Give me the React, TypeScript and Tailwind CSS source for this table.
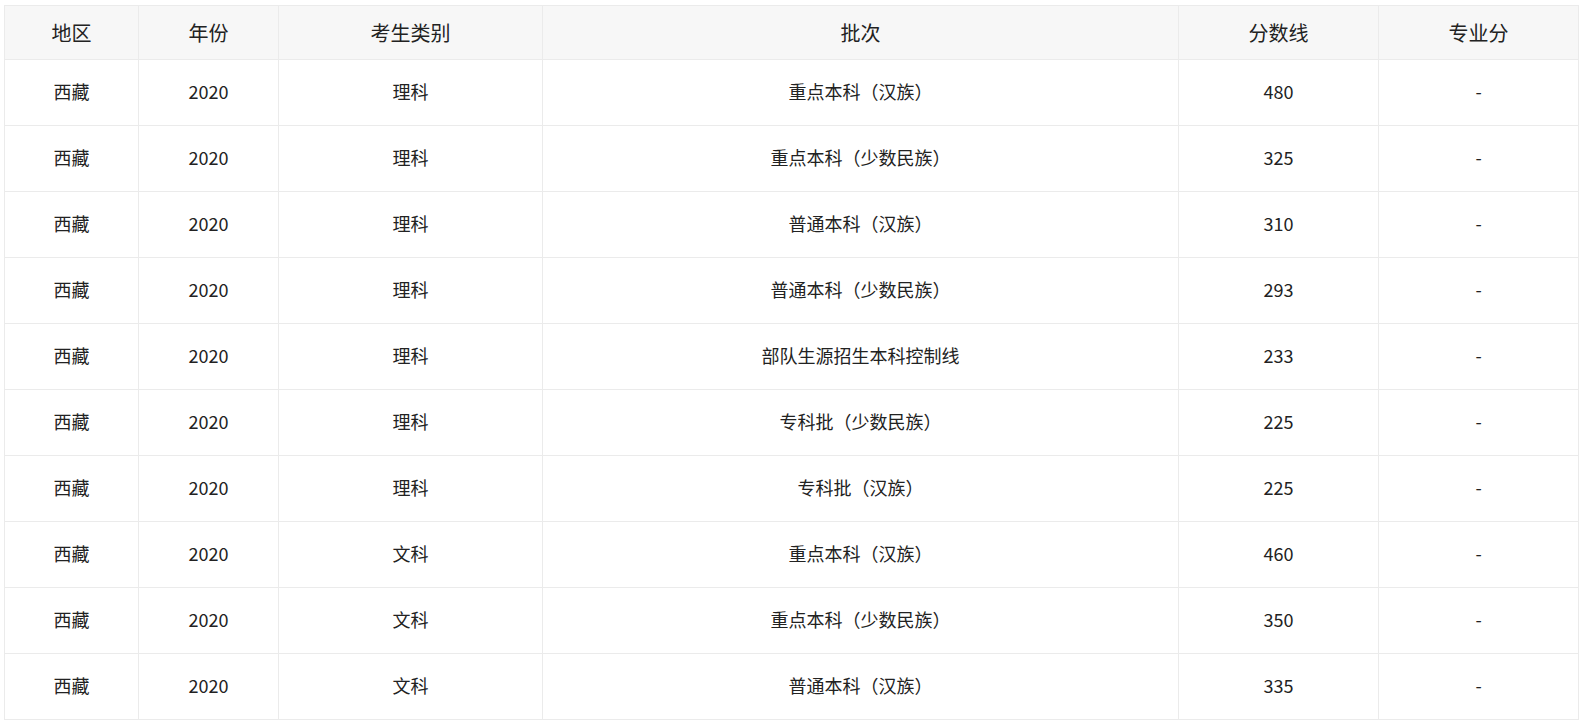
import React from "react";

const rows: [string, string, string, string, string, string][] = [
  ["西藏", "2020", "理科", "重点本科（汉族）", "480", "-"],
  ["西藏", "2020", "理科", "重点本科（少数民族）", "325", "-"],
  ["西藏", "2020", "理科", "普通本科（汉族）", "310", "-"],
  ["西藏", "2020", "理科", "普通本科（少数民族）", "293", "-"],
  ["西藏", "2020", "理科", "部队生源招生本科控制线", "233", "-"],
  ["西藏", "2020", "理科", "专科批（少数民族）", "225", "-"],
  ["西藏", "2020", "理科", "专科批（汉族）", "225", "-"],
  ["西藏", "2020", "文科", "重点本科（汉族）", "460", "-"],
  ["西藏", "2020", "文科", "重点本科（少数民族）", "350", "-"],
  ["西藏", "2020", "文科", "普通本科（汉族）", "335", "-"],
];

const headers = ["地区", "年份", "考生类别", "批次", "分数线", "专业分"];

export default function App() {
  return (
    <div
      className="w-[1580px] h-[723px] bg-white pl-[4px] pt-[5px]"
      style={{ fontFamily: '"Microsoft YaHei", "Noto Sans CJK SC", "Noto Sans", sans-serif' }}
    >
      <div className="grid grid-cols-[134px_140px_264px_636px_200px_200px] w-[1575px] border-l border-t border-[#ebebeb] text-[#222]">
        {headers.map((h) => (
          <div
            key={h}
            className="h-[54px] bg-[#f7f7f7] border-r border-b border-[#ebebeb] flex items-center justify-center text-[20px]"
          >
            {h}
          </div>
        ))}
        {rows.map((r, i) =>
          r.map((c, j) => (
            <div
              key={i + "-" + j}
              className="h-[66px] pb-[3px] border-r border-b border-[#ebebeb] flex items-center justify-center text-[18px]"
            >
              {c}
            </div>
          ))
        )}
      </div>
    </div>
  );
}
